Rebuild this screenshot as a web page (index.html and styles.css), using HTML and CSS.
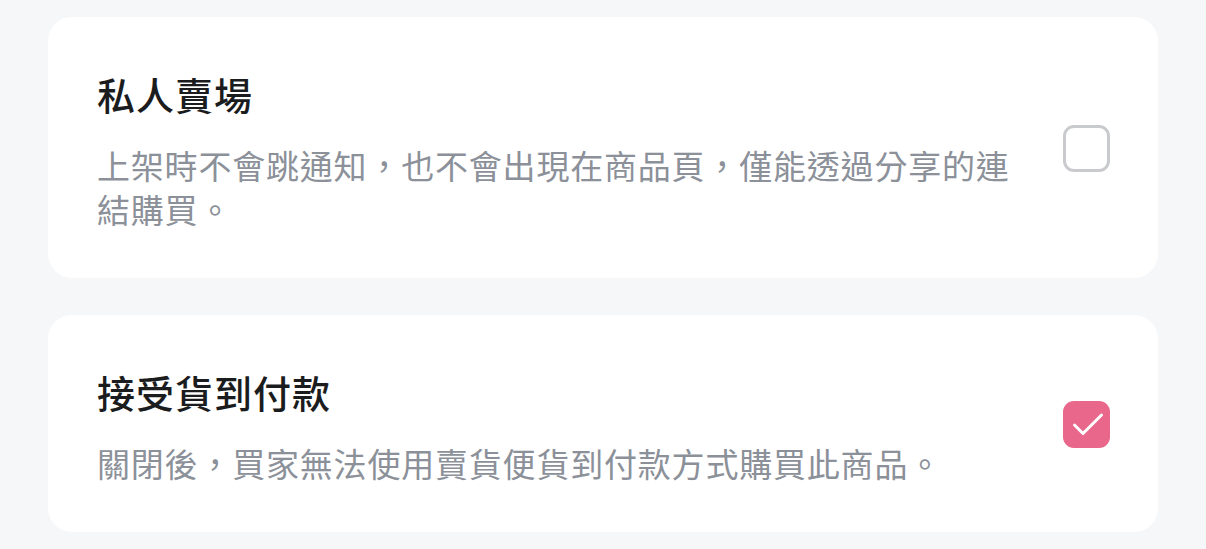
FILE: index.html
```html
<!DOCTYPE html>
<html lang="zh-Hant">
<head>
<meta charset="UTF-8">
<meta name="viewport" content="width=device-width, initial-scale=1.0">
<title>商品設定</title>
<link rel="stylesheet" href="styles.css">
</head>
<body>

<div class="settings">
  <!-- 私人賣場 -->
  <label class="option">
    <div class="option-text">
      <div class="option-title">私人賣場</div>
      <div class="option-desc">上架時不會跳通知，也不會出現在商品頁，僅能透過分享的連結購買。</div>
    </div>
    <input type="checkbox" class="check-input">
    <span class="check"></span>
  </label>

  <!-- 接受貨到付款 -->
  <label class="option">
    <div class="option-text">
      <div class="option-title">接受貨到付款</div>
      <div class="option-desc">關閉後，買家無法使用賣貨便貨到付款方式購買此商品。</div>
    </div>
    <input type="checkbox" class="check-input" checked>
    <span class="check">
      <svg viewBox="0 0 47 47" width="47" height="47">
        <polyline points="11.5,24 20,32.5 38.5,14" fill="none" stroke="#fff" stroke-width="3" stroke-linecap="round" stroke-linejoin="round"/>
      </svg>
    </span>
  </label>
</div>

</body>
</html>
```

FILE: styles.css
```css
body {
  margin: 0;
  background: #f6f7f9;
  font-family: "Noto Sans CJK TC", "Noto Sans", sans-serif;
}
.settings {
  display: flex;
  flex-direction: column;
  gap: 37px;
  padding: 17px 48px 0 48px;
}
.option {
  display: flex;
  align-items: center;
  gap: 24px;
  background: #fff;
  border-radius: 24px;
  padding: 48px 48px 47px 49px;
  cursor: pointer;
}
.option-text {
  flex: 1;
}
.option-title {
  font-size: 38px;
  line-height: 58px;
  font-weight: 500;
  color: #1b1c1e;
  letter-spacing: 1px;
  margin-bottom: 20px;
}
.option-desc {
  font-size: 33px;
  line-height: 44px;
  color: #8b9099;
  letter-spacing: 0.8px;
}
.check-input {
  display: none;
}
.check {
  flex: none;
  width: 47px;
  height: 47px;
  box-sizing: border-box;
  border: 3px solid #c9cacd;
  border-radius: 11px;
  display: flex;
  align-items: center;
  justify-content: center;
}
.check-input:checked + .check {
  border: none;
  background: #e9678b;
}
.check svg {
  display: block;
}
```
